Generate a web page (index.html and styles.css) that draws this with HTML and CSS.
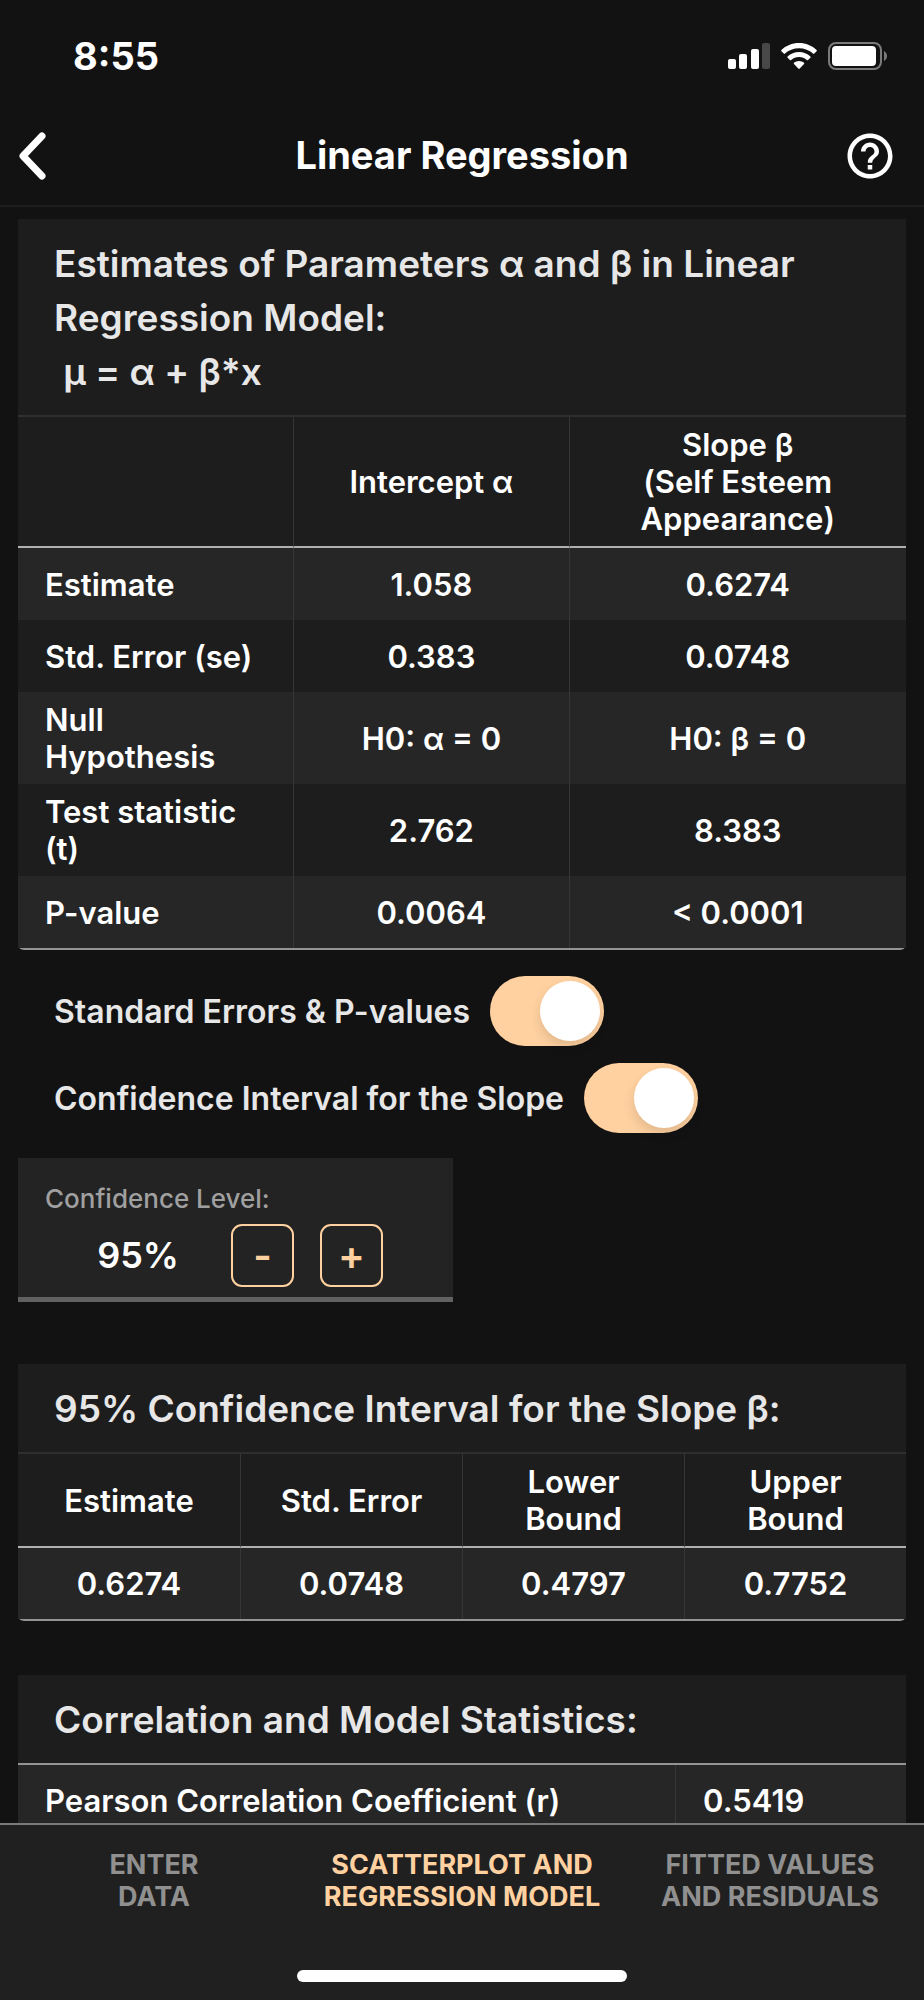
FILE: index.html
```html
<!doctype html>
<html lang="en">
<head>
	<meta charset="UTF-8" />
	<meta name="viewport" content="width=device-width, initial-scale=1" />
	<title>Linear Regression</title>
	<link rel="stylesheet" href="styles.css">
</head>
<body>
	<div class="app">
		<div class="status">
			<span class="time">8:55</span>
			<div class="status-icons">
				<svg width="42" height="26" viewBox="0 0 42 26" aria-hidden="true">
					<rect x="0" y="16" width="8" height="10" rx="2" fill="#fff"/>
					<rect x="11" y="11" width="8" height="15" rx="2" fill="#fff"/>
					<rect x="23" y="6" width="8" height="20" rx="2" fill="#fff"/>
					<rect x="34" y="0" width="8" height="26" rx="2" fill="#484848"/>
				</svg>
				<svg width="36" height="26" viewBox="0 0 36 26" aria-hidden="true">
					<path fill="#fff" d="M18 0C11 0 4.800 2.700.4 7c-.4.400-.4.900 0 1.300l2.300 2.300c.4.400.9.400 1.300 0C7.600 7.200 12.600 5.200 18 5.200s10.400 2 14 5.400c.4.400.9.400 1.300 0l2.300-2.300c.4-.4.400-.9 0-1.300C31.200 2.700 25 0 18 0z"/>
					<path fill="#fff" d="M18 9C13.600 9 9.600 10.700 6.600 13.400c-.4.400-.4.900 0 1.300l2.300 2.300c.4.400.9.400 1.300 0 2.100-1.800 4.800-2.900 7.800-2.900s5.700 1.100 7.800 2.900c.4.400.9.400 1.300 0l2.300-2.300c.4-.4.400-.9 0-1.300C26.400 10.700 22.400 9 18 9z"/>
					<path fill="#fff" d="M18 18c-1.900 0-3.700.7-5 1.800-.4.400-.4.900 0 1.300l4.300 4.500c.4.400 1 .4 1.400 0l4.300-4.500c.4-.4.400-.9 0-1.300C21.700 18.700 19.900 18 18 18z"/>
				</svg>
				<svg width="60" height="30" viewBox="0 0 60 30" aria-hidden="true">
					<rect x="1" y="2" width="52" height="26" rx="7" fill="none" stroke="#7b7b7b" stroke-width="2"/>
					<rect x="4" y="5" width="44" height="20" rx="4" fill="#fff"/>
					<path d="M56 10c4 2 4 8 0 10z" fill="#7b7b7b"/>
				</svg>
			</div>
		</div>

		<header class="header">
			<button class="icon-btn" type="button" aria-label="Back">
				<svg width="28" height="48" viewBox="0 0 28 48" fill="none" stroke="#fff" stroke-width="7" stroke-linecap="round" stroke-linejoin="round">
					<path d="M24 4 5 24l19 20"/>
				</svg>
			</button>
			<h1>Linear Regression</h1>
			<button class="icon-btn right" type="button" aria-label="Help">
				<svg width="54" height="54" viewBox="0 0 24 24" fill="#fff">
					<path d="M11 18h2v-2h-2v2zm1-16C6.480 2 2 6.480 2 12s4.480 10 10 10 10-4.480 10-10S17.520 2 12 2zm0 18c-4.410 0-8-3.590-8-8s3.590-8 8-8 8 3.590 8 8-3.590 8-8 8zm0-14c-2.210 0-4 1.790-4 4h2c0-1.100.9-2 2-2s2 .9 2 2c0 2-3 1.750-3 5h2c0-2.250 3-2.500 3-5 0-2.210-1.790-4-4-4z"/>
				</svg>
			</button>
		</header>

		<main class="content">
			<section class="card">
				<h2 id="estimates">Estimates of Parameters α and β in Linear Regression Model:<br>&nbsp;μ = α + β*x</h2>
				<table class="estimates" aria-labelledby="estimates">
					<colgroup>
						<col class="col-label">
						<col class="col-alpha">
						<col>
					</colgroup>
					<thead>
						<tr>
							<td></td>
							<th scope="col">Intercept α</th>
							<th scope="col">Slope β<br>(Self Esteem Appearance)</th>
						</tr>
					</thead>
					<tbody>
						<tr>
							<th scope="row">Estimate</th>
							<td>1.058</td>
							<td>0.6274</td>
						</tr>
						<tr>
							<th scope="row">Std. Error (se)</th>
							<td>0.383</td>
							<td>0.0748</td>
						</tr>
						<tr>
							<th scope="row">Null Hypothesis</th>
							<td>H0: α = 0</td>
							<td>H0: β = 0</td>
						</tr>
						<tr>
							<th scope="row">Test statistic (t)</th>
							<td>2.762</td>
							<td>8.383</td>
						</tr>
						<tr>
							<th scope="row">P-value</th>
							<td>0.0064</td>
							<td>&lt; 0.0001</td>
						</tr>
					</tbody>
				</table>
			</section>

			<div class="switches">
				<label class="switch">
					<span>Standard Errors &amp; P-values</span>
					<input type="checkbox" role="switch" checked>
				</label>
				<label class="switch">
					<span>Confidence Interval for the Slope</span>
					<input type="checkbox" role="switch" checked>
				</label>
			</div>

			<div class="level" role="group" aria-labelledby="level-label">
				<span id="level-label" class="level-label">Confidence Level:</span>
				<div class="stepper">
					<output class="level-value" id="level">95%</output>
					<button class="step" type="button" aria-label="Decrease">-</button>
					<button class="step" type="button" aria-label="Increase">+</button>
				</div>
			</div>

			<section class="card">
				<h2 id="interval">95% Confidence Interval for the Slope β:</h2>
				<table aria-labelledby="interval">
					<thead>
						<tr>
							<th scope="col">Estimate</th>
							<th scope="col">Std. Error</th>
							<th scope="col">Lower Bound</th>
							<th scope="col">Upper Bound</th>
						</tr>
					</thead>
					<tbody>
						<tr>
							<td>0.6274</td>
							<td>0.0748</td>
							<td>0.4797</td>
							<td>0.7752</td>
						</tr>
					</tbody>
				</table>
			</section>

			<section class="card">
				<h2 id="stats">Correlation and Model Statistics:</h2>
				<table class="stats" aria-labelledby="stats">
					<colgroup>
						<col class="col-name">
						<col>
					</colgroup>
					<tbody>
						<tr>
							<th scope="row">Pearson Correlation Coefficient (r)</th>
							<td>0.5419</td>
						</tr>
					</tbody>
				</table>
			</section>
		</main>

		<nav class="tabbar">
			<div class="tabs">
				<a href="#data">Enter<br>Data</a>
				<a href="#model" class="active" aria-current="page">Scatterplot and<br>Regression Model</a>
				<a href="#fitted">Fitted Values<br>and Residuals</a>
			</div>
			<div class="home"></div>
		</nav>
	</div>
	<script src="script.js"></script>
</body>
</html>
```
FILE: styles.css
```css
*{
	box-sizing: border-box;
}
body,h1,h2{
	margin: 0;
	padding: 0;
}
body{
	background: #121212;
	color: #fff;
	font-family: Inter, "Liberation Sans", sans-serif;
	font-size: 31px;
	font-weight: 600;
	line-height: 37px;
}
button{
	font: inherit;
	padding: 0;
	border: 0;
	background: none;
	cursor: pointer;
}
svg{
	display: block;
}
.app{
	display: flex;
	flex-direction: column;
	height: 100vh;
}

/* status bar */
.status{
	display: flex;
	align-items: center;
	justify-content: space-between;
	height: 106px;
	padding: 6px 36px 0 73px;
}
.time{
	font-size: 38px;
	font-weight: 700;
}
.status-icons{
	display: flex;
	align-items: center;
	gap: 11px;
}

/* header */
.header{
	display: grid;
	grid-template-columns: 60px 1fr 60px;
	align-items: center;
	height: 101px;
	padding: 0 18px;
	border-bottom: 2px solid #1e1e1e;
}
.header h1{
	font-size: 38px;
	font-weight: 700;
	text-align: center;
}
.icon-btn{
	justify-self: start;
}
.icon-btn.right{
	justify-self: end;
	margin-right: 9px;
}

.content{
	flex: 1;
	min-height: 0;
	overflow-y: auto;
	scrollbar-width: none;
	padding: 12px 18px;
}

/* cards */
.card{
	margin-bottom: 54px;
	background: #1d1d1d;
	border-bottom: 2px solid #949494;
	border-radius: 0 0 6px 6px;
}
.card h2{
	padding: 18px 36px 16px;
	font-size: 37px;
	font-weight: 600;
	line-height: 54px;
	color: #e7e7e7;
}
table{
	width: 100%;
	table-layout: fixed;
	border-collapse: separate;
	border-spacing: 0;
	border-top: 2px solid #2e2e2e;
}
th,td{
	height: 71px;
	padding: 9px 27px;
	font-weight: 600;
	text-align: center;
	vertical-align: middle;
}
th + th,
td + th,
th + td,
td + td{
	border-left: 1px solid #363636;
}
thead th,
thead td{
	border-bottom: 2px solid #b0b0b0;
}
tbody tr:nth-child(odd){
	background: #262626;
}
tbody th{
	text-align: left;
}
.estimates tbody th{
	height: 72px;
}
.col-label,
.col-alpha{
	width: 31%;
}
.stats{
	border-top-color: #949494;
}
.stats td{
	text-align: left;
}
.col-name{
	width: 74%;
}

/* switches */
.switches{
	display: flex;
	flex-direction: column;
	align-items: flex-start;
	gap: 17px;
	margin: -28px 36px 25px;
}
.switch{
	display: flex;
	align-items: center;
	gap: 20px;
	font-size: 32px;
	color: #e7e7e7;
}
.switch input{
	appearance: none;
	display: flex;
	align-items: center;
	width: 114px;
	height: 70px;
	margin: 0;
	padding: 0 4px;
	border-radius: 35px;
	background: #4a4a4a;
}
.switch input::before{
	content: "";
	width: 60px;
	height: 60px;
	border-radius: 50%;
	background: #fff;
	box-shadow: 0 6px 12px rgba(0,0,0,.12);
}
.switch input:checked{
	justify-content: flex-end;
	background: #ffd1a0;
}

/* confidence level */
.level{
	width: 49%;
	margin-bottom: 62px;
	padding: 22px 27px 10px;
	border-bottom: 5px solid #616161;
	background: #232323;
}
.level-label{
	display: block;
	font-size: 26px;
	font-weight: 500;
	color: #a0a0a0;
}
.stepper{
	display: flex;
	align-items: center;
	gap: 26px;
	padding-top: 7px;
}
.level-value{
	width: 160px;
	padding-right: 26px;
	font-size: 36px;
	text-align: right;
}
.step{
	width: 63px;
	height: 63px;
	border: 2px solid #ffd1a0;
	border-radius: 11px;
	color: #ffd1a0;
	font-size: 40px;
}

/* tab bar */
.tabbar{
	height: 177px;
	padding-top: 24px;
	border-top: 2px solid #7a7a7a;
	background: #202020;
}
.tabs{
	display: grid;
	grid-template-columns: repeat(3, 1fr);
}
.tabs a{
	color: #909090;
	font-size: 27px;
	font-weight: 700;
	line-height: 32px;
	text-align: center;
	text-decoration: none;
	text-transform: uppercase;
}
.tabs a.active{
	color: #ffd1a0;
}
.home{
	width: 330px;
	height: 12px;
	margin: 57px auto 0;
	border-radius: 6px;
	background: #fff;
}
```
FILE: script.js
```js
let level = document.querySelector('#level');
let steps = document.querySelectorAll('.step');
let levels = [80, 90, 95, 99];
let cur = 2;

steps.forEach((btn, index) => {
	btn.onclick = function () {
		cur += index === 0 ? -1 : 1;
		cur = Math.max(0, Math.min(levels.length - 1, cur));
		level.textContent = levels[cur] + '%';
	};
});
```
